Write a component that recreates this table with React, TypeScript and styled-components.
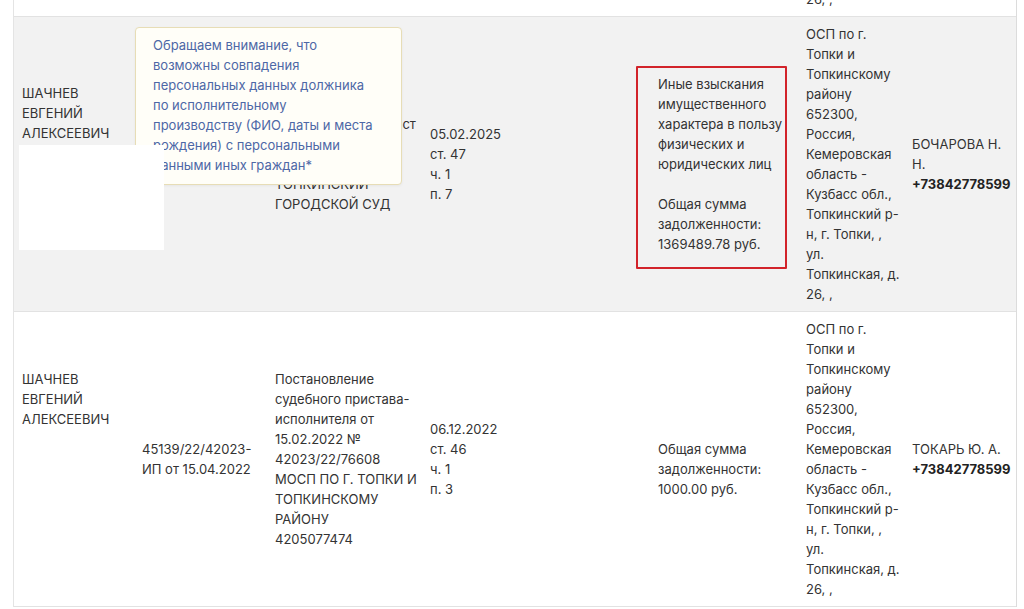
import React from "react";
import styled, { createGlobalStyle } from "styled-components";

const Global = createGlobalStyle`
  html, body { margin: 0; padding: 0; background: #ffffff; }
  body { font-family: Inter, "Noto Sans", Roboto, sans-serif; font-size: 13px; line-height: 20px; color: #333333; }
`;

const COLS = "120px 133px 155px 228px 148px 106px 112px";

const Table = styled.div`
  margin-left: 13px;
  width: 1002px;
  border-left: 1px solid #e4e4e4;
  border-right: 1px solid #dcdcdc;
`;

const Row = styled.div<{ $shade?: boolean; $tail?: boolean }>`
  position: relative;
  display: grid;
  grid-template-columns: ${COLS};
  grid-template-rows: ${(p) => (p.$tail ? "16px" : "294px")};
  background: ${(p) => (p.$shade ? "#f2f2f2" : "#ffffff")};
  border-bottom: 1px solid #e2e2e2;
  overflow: ${(p) => (p.$tail ? "hidden" : "visible")};
  align-items: ${(p) => (p.$tail ? "unsafe end" : "center")};
`;

const Cell = styled.div`
  padding: 7px 8px;
  white-space: nowrap;
  color: #333333;
`;

const Line = styled.div<{ $bold?: boolean }>`
  height: 20px;
  font-weight: ${(p) => (p.$bold ? 700 : 400)};
  color: ${(p) => (p.$bold ? "#222222" : "inherit")};
`;

const Redaction = styled.div<{ $lines: number }>`
  position: relative;
  z-index: 3;
  height: ${(p) => p.$lines * 20}px;
`;

const WhiteBox = styled.div`
  margin-left: -3px;
  margin-top: 2px;
  width: 145px;
  height: 105px;
  background: #ffffff;
`;

const Tooltip = styled.div`
  position: absolute;
  z-index: 2;
  left: 121px;
  top: 10px;
  width: 231px;
  padding: 7px 17px 9px;
  background: #fffef8;
  border: 1px solid #e7ddb6;
  border-radius: 4px;
  color: #4d67a6;
  white-space: nowrap;
  box-shadow: 0 1px 3px rgba(0, 0, 0, 0.05);
`;

const Highlight = styled.div`
  position: absolute;
  z-index: 2;
  left: 622px;
  top: 49px;
  width: 147px;
  height: 199px;
  border: 2px solid #d2232a;
  border-radius: 1px;
  pointer-events: none;
`;

const Lines: React.FC<{ items: string[]; boldLast?: boolean }> = ({ items, boldLast }) => (
  <>
    {items.map((t, i) => (
      <Line key={i} $bold={boldLast && i === items.length - 1}>
        {t === "" ? "\u00a0" : t}
      </Line>
    ))}
  </>
);

const address = [
  "ОСП по г.",
  "Топки и",
  "Топкинскому",
  "району",
  "652300,",
  "Россия,",
  "Кемеровская",
  "область -",
  "Кузбасс обл.,",
  "Топкинский р-",
  "н, г. Топки, ,",
  "ул.",
  "Топкинская, д.",
  "26, ,",
];

const name = ["ШАЧНЕВ", "ЕВГЕНИЙ", "АЛЕКСЕЕВИЧ"];

export default function App() {
  return (
    <>
      <Global />
      <Table>
        <Row $tail>
          <Cell />
          <Cell />
          <Cell />
          <Cell />
          <Cell />
          <Cell>
            <Lines items={["Топкинская, д.", "26, ,"]} />
          </Cell>
          <Cell />
        </Row>

        <Row $shade>
          <Cell>
            <Lines items={name} />
            <Redaction $lines={5}>
              <WhiteBox />
            </Redaction>
          </Cell>
          <Cell>
            <Lines items={["12873/25/42023-", "ИП от 12.02.2025"]} />
          </Cell>
          <Cell>
            <Lines
              items={[
                "Исполнительный лист",
                "от 14.01.2025 №",
                "ФС 046132905",
                "ТОПКИНСКИЙ",
                "ГОРОДСКОЙ СУД",
              ]}
            />
          </Cell>
          <Cell>
            <Lines items={["05.02.2025", "ст. 47", "ч. 1", "п. 7"]} />
          </Cell>
          <Cell>
            <Lines
              items={[
                "Иные взыскания",
                "имущественного",
                "характера в пользу",
                "физических и",
                "юридических лиц",
                "",
                "Общая сумма",
                "задолженности:",
                "1369489.78 руб.",
              ]}
            />
          </Cell>
          <Cell>
            <Lines items={address} />
          </Cell>
          <Cell>
            <Lines items={["БОЧАРОВА Н.", "Н.", "+73842778599"]} boldLast />
          </Cell>
          <Tooltip>
            <Lines
              items={[
                "Обращаем внимание, что",
                "возможны совпадения",
                "персональных данных должника",
                "по исполнительному",
                "производству (ФИО, даты и места",
                "рождения) с персональными",
                "данными иных граждан*",
              ]}
            />
          </Tooltip>
          <Highlight />
        </Row>

        <Row>
          <Cell>
            <Lines items={name} />
            <Redaction $lines={6} />
          </Cell>
          <Cell>
            <Lines items={["45139/22/42023-", "ИП от 15.04.2022"]} />
          </Cell>
          <Cell>
            <Lines
              items={[
                "Постановление",
                "судебного пристава-",
                "исполнителя от",
                "15.02.2022 №",
                "42023/22/76608",
                "МОСП ПО Г. ТОПКИ И",
                "ТОПКИНСКОМУ",
                "РАЙОНУ",
                "4205077474",
              ]}
            />
          </Cell>
          <Cell>
            <Lines items={["06.12.2022", "ст. 46", "ч. 1", "п. 3"]} />
          </Cell>
          <Cell>
            <Lines items={["", "Общая сумма", "задолженности:", "1000.00 руб."]} />
          </Cell>
          <Cell>
            <Lines items={address} />
          </Cell>
          <Cell>
            <Lines items={["ТОКАРЬ Ю. А.", "+73842778599"]} boldLast />
          </Cell>
        </Row>
      </Table>
    </>
  );
}
